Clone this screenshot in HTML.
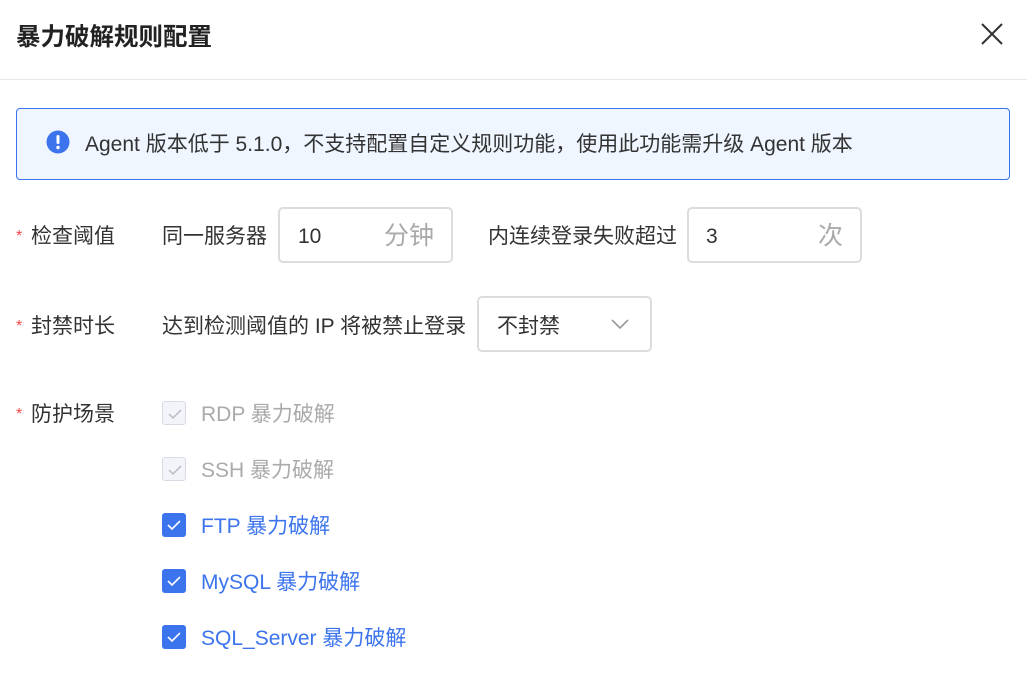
<!DOCTYPE html>
<html><head><meta charset="utf-8"><style>
*{margin:0;padding:0;box-sizing:border-box}
body{width:1027px;height:676px;background:#fff;font-family:"Liberation Sans","Noto Sans CJK SC",sans-serif;color:#333;position:relative;overflow:hidden}
.abs{position:absolute;white-space:nowrap}
.title{left:16px;top:25px;font-size:24.5px;line-height:26px;font-weight:bold;color:#222}
.hr{left:0;top:79px;width:1027px;height:1px;background:#e8e8e8}
.alert{left:16px;top:108px;width:994px;height:72px;background:#eff6ff;border:1px solid #3c74ee;border-radius:4px}
.t{font-size:21px;line-height:24px;color:#333;margin-top:2px}
.u{font-size:25px;line-height:28px;color:#aaa;margin-top:2px}
.req{color:#f04848;font-size:16px;margin-top:2px}
.box{border:2px solid #dcdcdc;border-radius:5px;background:#fff}
.cb{width:24px;height:24px;border-radius:3px}
.cb.dis{background:#f2f4fa;border:1px solid #d8dbe3}
.cb.on{background:#3c74ee}
.cb svg{position:absolute;left:5px;top:6px}
</style></head><body>
<div class="abs title">暴力破解规则配置</div>
<svg class="abs" style="left:980px;top:22px" width="24" height="24" viewBox="0 0 24 24"><path d="M2 2L22 22M22 2L2 22" stroke="#333" stroke-width="2"/></svg>
<div class="abs hr"></div>
<div class="abs alert"></div>
<svg class="abs" style="left:46px;top:130px" width="24" height="24" viewBox="0 0 24 24"><circle cx="12" cy="12" r="11.5" fill="#3c74ee"/><rect x="10.5" y="5" width="3" height="9" rx="1.5" fill="#fff"/><circle cx="12" cy="17.5" r="1.7" fill="#fff"/></svg>
<div class="abs t" style="left:85px;top:131px">Agent 版本低于 5.1.0，不支持配置自定义规则功能，使用此功能需升级 Agent 版本</div>

<div class="abs req" style="left:16px;top:226px">*</div>
<div class="abs t" style="left:31px;top:223px">检查阈值</div>
<div class="abs t" style="left:162px;top:223px">同一服务器</div>
<div class="abs box" style="left:278px;top:207px;width:175px;height:56px"></div>
<div class="abs t" style="left:298px;top:223px">10</div>
<div class="abs u" style="left:384px;top:220px">分钟</div>
<div class="abs t" style="left:488px;top:223px">内连续登录失败超过</div>
<div class="abs box" style="left:687px;top:207px;width:175px;height:56px"></div>
<div class="abs t" style="left:706px;top:223px">3</div>
<div class="abs u" style="left:818px;top:220px">次</div>

<div class="abs req" style="left:16px;top:316px">*</div>
<div class="abs t" style="left:31px;top:313px">封禁时长</div>
<div class="abs t" style="left:162px;top:313px">达到检测阈值的 IP 将被禁止登录</div>
<div class="abs box" style="left:477px;top:296px;width:175px;height:56px"></div>
<div class="abs t" style="left:497px;top:313px">不封禁</div>
<svg class="abs" style="left:610px;top:318px" width="20" height="12" viewBox="0 0 20 12"><path d="M2 2L10 10L18 2" stroke="#999" stroke-width="1.6" fill="none"/></svg>

<div class="abs req" style="left:16px;top:404px">*</div>
<div class="abs t" style="left:31px;top:401px">防护场景</div>

<div class="abs cb dis" style="left:162px;top:401px"><svg width="14" height="12" viewBox="0 0 14 12"><path d="M1 6L5 10L13 2" stroke="#b8bcc6" stroke-width="1.5" fill="none"/></svg></div>
<div class="abs t" style="left:201px;top:401px;color:#aaa">RDP 暴力破解</div>
<div class="abs cb dis" style="left:162px;top:457px"><svg width="14" height="12" viewBox="0 0 14 12"><path d="M1 6L5 10L13 2" stroke="#b8bcc6" stroke-width="1.5" fill="none"/></svg></div>
<div class="abs t" style="left:201px;top:457px;color:#aaa">SSH 暴力破解</div>
<div class="abs cb on" style="left:162px;top:513px"><svg width="14" height="12" viewBox="0 0 14 12"><path d="M1 6L5 10L13 2" stroke="#fff" stroke-width="1.6" fill="none"/></svg></div>
<div class="abs t" style="left:201px;top:513px;color:#3c74ee">FTP 暴力破解</div>
<div class="abs cb on" style="left:162px;top:569px"><svg width="14" height="12" viewBox="0 0 14 12"><path d="M1 6L5 10L13 2" stroke="#fff" stroke-width="1.6" fill="none"/></svg></div>
<div class="abs t" style="left:201px;top:569px;color:#3c74ee">MySQL 暴力破解</div>
<div class="abs cb on" style="left:162px;top:625px"><svg width="14" height="12" viewBox="0 0 14 12"><path d="M1 6L5 10L13 2" stroke="#fff" stroke-width="1.6" fill="none"/></svg></div>
<div class="abs t" style="left:201px;top:625px;color:#3c74ee">SQL_Server 暴力破解</div>
</body></html>
